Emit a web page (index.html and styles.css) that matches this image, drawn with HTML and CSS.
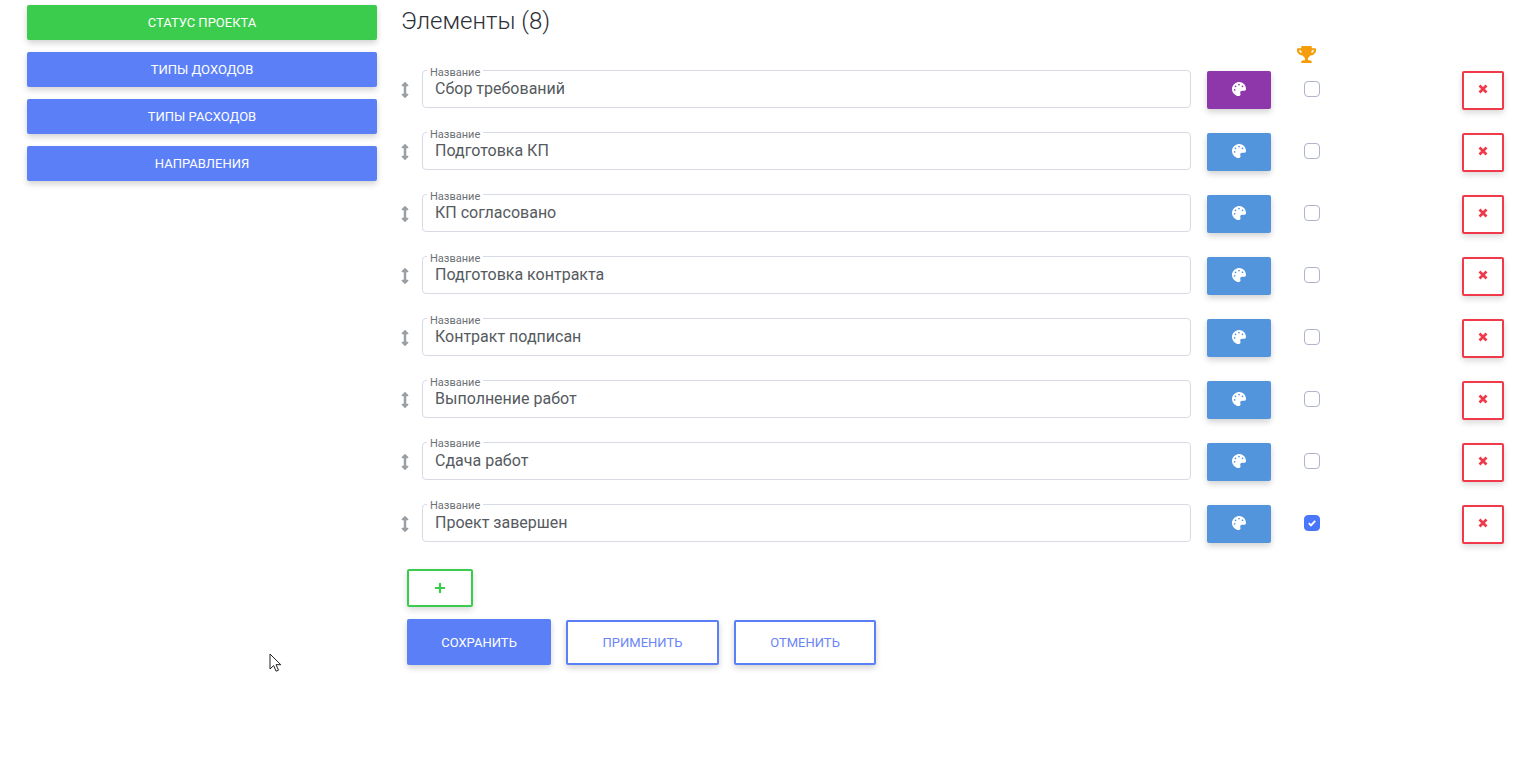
FILE: index.html
```html
<!DOCTYPE html>
<html lang="ru">
<head>
<meta charset="utf-8">
<title>Элементы</title>
<link rel="stylesheet" href="styles.css">
</head>
<body>
<svg class="defs" width="0" height="0" aria-hidden="true">
  <symbol id="palette" viewBox="0 0 512 512"><path d="M204.3 5C104.9 24.4 24.8 104.3 5.2 203.4c-37 187 131.7 326.4 258.8 306.7 41.2-6.4 61.4-54.6 42.5-91.7-23.1-45.4 9.9-98.4 60.9-98.4h79.7c35.8 0 64.8-29.6 64.9-65.3C511.5 97.1 368.1-26.9 204.3 5zM96 320c-17.7 0-32-14.3-32-32s14.3-32 32-32 32 14.3 32 32-14.3 32-32 32zm32-128c-17.7 0-32-14.3-32-32s14.3-32 32-32 32 14.3 32 32-14.3 32-32 32zm128-64c-17.7 0-32-14.3-32-32s14.3-32 32-32 32 14.3 32 32-14.3 32-32 32zm128 64c-17.7 0-32-14.3-32-32s14.3-32 32-32 32 14.3 32 32-14.3 32-32 32z"/></symbol>
  <symbol id="grip" viewBox="0 0 256 512"><path d="M214.059 377.941H168V134.059h46.059c21.382 0 32.09-25.851 16.971-40.971L144.971 7.029c-9.373-9.373-24.568-9.373-33.941 0L24.971 93.088c-15.119 15.119-4.411 40.971 16.971 40.971H88v243.882H41.941c-21.382 0-32.09 25.851-16.971 40.971l86.059 86.059c9.373 9.373 24.568 9.373 33.941 0l86.059-86.059c15.12-15.119 4.412-40.971-16.97-40.971z"/></symbol>
  <symbol id="times" viewBox="0 0 10 10"><path d="M1.5 1.5l7 7M8.5 1.5l-7 7"/></symbol>
</svg>
<div class="page">
  <nav class="sidebar">
    <button class="side-btn side-green">СТАТУС ПРОЕКТА</button>
    <button class="side-btn">ТИПЫ ДОХОДОВ</button>
    <button class="side-btn">ТИПЫ РАСХОДОВ</button>
    <button class="side-btn">НАПРАВЛЕНИЯ</button>
  </nav>
  <main class="main">
    <h1 class="title">Элементы (8)</h1>
    <div class="trophy-row">
      <svg class="trophy" viewBox="0 0 576 512"><path d="M552 64H448V24c0-13.3-10.7-24-24-24H152c-13.3 0-24 10.7-24 24v40H24C10.7 64 0 74.7 0 88v56c0 35.7 22.5 72.4 61.9 100.7 31.5 22.7 69.8 37.1 110 41.7C203.3 338.5 240 360 240 360v72h-48c-35.3 0-64 20.7-64 56v12c0 6.6 5.4 12 12 12h296c6.6 0 12-5.4 12-12v-12c0-35.3-28.7-56-64-56h-48v-72s36.7-21.5 68.1-73.6c40.3-4.6 78.6-19 110-41.7 39.3-28.3 61.9-65 61.9-100.7V88c0-13.3-10.7-24-24-24zM99.3 192.8C74.9 175.2 64 155.6 64 144v-16h64.2c1 32.6 5.8 61.2 12.8 86.2-15.1-5.2-29.2-12.4-41.7-21.4zM512 144c0 16.1-17.7 36.1-35.3 48.8-12.5 9-26.7 16.2-41.8 21.4 7-25 11.8-53.6 12.8-86.2H512v16z"/></svg>
    </div>
    <div class="rows">
      <div class="row">
        <svg class="grip"><use href="#grip"/></svg>
        <div class="field"><span class="field-label">Название</span><span class="field-value">Сбор требований</span></div>
        <button class="color-btn color-purple"><svg class="palette"><use href="#palette"/></svg></button>
        <span class="check"></span>
        <button class="del-btn"><svg class="times"><use href="#times"/></svg></button>
      </div>
      <div class="row">
        <svg class="grip"><use href="#grip"/></svg>
        <div class="field"><span class="field-label">Название</span><span class="field-value">Подготовка КП</span></div>
        <button class="color-btn"><svg class="palette"><use href="#palette"/></svg></button>
        <span class="check"></span>
        <button class="del-btn"><svg class="times"><use href="#times"/></svg></button>
      </div>
      <div class="row">
        <svg class="grip"><use href="#grip"/></svg>
        <div class="field"><span class="field-label">Название</span><span class="field-value">КП согласовано</span></div>
        <button class="color-btn"><svg class="palette"><use href="#palette"/></svg></button>
        <span class="check"></span>
        <button class="del-btn"><svg class="times"><use href="#times"/></svg></button>
      </div>
      <div class="row">
        <svg class="grip"><use href="#grip"/></svg>
        <div class="field"><span class="field-label">Название</span><span class="field-value">Подготовка контракта</span></div>
        <button class="color-btn"><svg class="palette"><use href="#palette"/></svg></button>
        <span class="check"></span>
        <button class="del-btn"><svg class="times"><use href="#times"/></svg></button>
      </div>
      <div class="row">
        <svg class="grip"><use href="#grip"/></svg>
        <div class="field"><span class="field-label">Название</span><span class="field-value">Контракт подписан</span></div>
        <button class="color-btn"><svg class="palette"><use href="#palette"/></svg></button>
        <span class="check"></span>
        <button class="del-btn"><svg class="times"><use href="#times"/></svg></button>
      </div>
      <div class="row">
        <svg class="grip"><use href="#grip"/></svg>
        <div class="field"><span class="field-label">Название</span><span class="field-value">Выполнение работ</span></div>
        <button class="color-btn"><svg class="palette"><use href="#palette"/></svg></button>
        <span class="check"></span>
        <button class="del-btn"><svg class="times"><use href="#times"/></svg></button>
      </div>
      <div class="row">
        <svg class="grip"><use href="#grip"/></svg>
        <div class="field"><span class="field-label">Название</span><span class="field-value">Сдача работ</span></div>
        <button class="color-btn"><svg class="palette"><use href="#palette"/></svg></button>
        <span class="check"></span>
        <button class="del-btn"><svg class="times"><use href="#times"/></svg></button>
      </div>
      <div class="row">
        <svg class="grip"><use href="#grip"/></svg>
        <div class="field"><span class="field-label">Название</span><span class="field-value">Проект завершен</span></div>
        <button class="color-btn"><svg class="palette"><use href="#palette"/></svg></button>
        <span class="check check-on"><svg class="tick" viewBox="0 0 10 10"><path d="M1.8 5.2l2.2 2.2 4.2-4.6"/></svg></span>
        <button class="del-btn"><svg class="times"><use href="#times"/></svg></button>
      </div>
    </div>
    <button class="add-btn"><svg class="plus" viewBox="0 0 12 12"><path d="M6 1v10M1 6h10"/></svg></button>
    <div class="actions">
      <button class="act-btn act-solid">СОХРАНИТЬ</button>
      <button class="act-btn act-outline act-apply">ПРИМЕНИТЬ</button>
      <button class="act-btn act-outline act-cancel">ОТМЕНИТЬ</button>
    </div>
  </main>
</div>
<svg class="cursor" viewBox="0 0 12 20"><path d="M1 1v15l3.6-3.4 2.5 5.6 2.4-1-2.5-5.5h4.8z"/></svg>
</body>
</html>
```
FILE: styles.css
```css
* { box-sizing: border-box; }
html, body { margin: 0; padding: 0; height: 100%; overflow: hidden; }
body {
  background: #fff;
  font-family: Roboto, "Liberation Sans", sans-serif;
  color: #495057;
  position: relative;
}
button { font-family: inherit; cursor: pointer; padding: 0; }
.defs { position: absolute; }
.page { display: flex; align-items: flex-start; padding-left: 27px; }

.sidebar {
  width: 350px;
  flex: none;
  display: flex;
  flex-direction: column;
  gap: 12px;
  padding-top: 5px;
}
.side-btn {
  height: 35px;
  border: 0;
  border-radius: 2px;
  background: #5a7ff7;
  color: #fff;
  font-size: 13px;
  font-weight: 400;
  box-shadow: 0 3px 6px rgba(0, 0, 0, .18);
}
.side-green { background: #3bcc4e; }

.main { flex: none; width: 1103px; margin-left: 24px; }
.title {
  margin: 4px 0 0;
  height: 35px;
  font-size: 24px;
  line-height: 34px;
  font-weight: 300;
  color: #2b2f36;
}
.trophy-row { display: flex; justify-content: flex-end; height: 31px; padding: 7px 188px 0 0; }
.trophy { width: 19px; height: 17px; fill: #f59c0b; }

.rows { display: flex; flex-direction: column; gap: 24px; }
.row { display: flex; align-items: flex-start; height: 38px; }
.grip { width: 8px; height: 16px; margin-top: 12px; fill: #9a9fa3; flex: none; }
.field {
  position: relative;
  width: 769px;
  height: 38px;
  margin-left: 13px;
  flex: none;
  border: 1px solid #d8dbe5;
  border-radius: 4px;
  padding: 8px 12px 0;
  font-size: 16px;
  line-height: 20px;
  color: #555a60;
}
.field-label {
  position: absolute;
  left: 4px;
  top: -4px;
  padding: 0 3px;
  background: #fff;
  font-size: 11px;
  line-height: 11px;
  color: #6c7075;
}
.row:nth-child(n+7) .field-label { top: -5px; }
.color-btn {
  width: 64px;
  height: 38px;
  margin: 1px 0 0 16px;
  padding-bottom: 2px;
  flex: none;
  border: 0;
  border-radius: 2px;
  background: #5295dd;
  display: flex;
  align-items: center;
  justify-content: center;
  box-shadow: 0 3px 6px rgba(0, 0, 0, .18);
}
.color-purple { background: #8e37aa; }
.palette { width: 14px; height: 14px; fill: #fff; }
.check {
  width: 16px;
  height: 16px;
  margin: 11px 0 0 33px;
  flex: none;
  border: 1px solid #adb5c6;
  border-radius: 4px;
  background: #fff;
  display: flex;
}
.check-on { background: #4a76fb; border-color: #4a76fb; align-items: center; justify-content: center; }
.tick { width: 10px; height: 10px; fill: none; stroke: #fff; stroke-width: 1.9; }
.del-btn {
  width: 42px;
  height: 39px;
  margin: 1px 0 0 142px;
  padding-bottom: 3px;
  flex: none;
  border: 2px solid #f03a4a;
  border-radius: 2px;
  background: #fff;
  display: flex;
  align-items: center;
  justify-content: center;
  box-shadow: 0 3px 6px rgba(0, 0, 0, .15);
}
.times { width: 10px; height: 10px; fill: none; stroke: #f03a4a; stroke-width: 2.7; }

.add-btn {
  display: flex;
  align-items: center;
  justify-content: center;
  width: 66px;
  height: 38px;
  margin: 27px 0 0 6px;
  border: 2px solid #3bcc4e;
  border-radius: 2px;
  background: #fff;
  box-shadow: 0 3px 6px rgba(0, 0, 0, .15);
}
.plus { width: 12px; height: 12px; fill: none; stroke: #3bcc4e; stroke-width: 2.2; }

.actions { display: flex; align-items: center; margin: 12px 0 0 6px; }
.act-btn {
  font-size: 13px;
  font-weight: 400;
  border-radius: 2px;
  box-shadow: 0 3px 6px rgba(0, 0, 0, .18);
}
.act-solid { width: 144px; height: 46px; border: 0; background: #5a7ff7; color: #fff; }
.act-outline { height: 45px; border: 2px solid #5a7ff7; background: #fff; color: #6a85f5; margin: 1px 0 0 15px; }
.act-apply { width: 153px; }
.act-cancel { width: 142px; }

.cursor {
  position: absolute;
  left: 269px;
  top: 653px;
  width: 12px;
  height: 20px;
  fill: #fff;
  stroke: #222;
  stroke-width: 1;
}
```
